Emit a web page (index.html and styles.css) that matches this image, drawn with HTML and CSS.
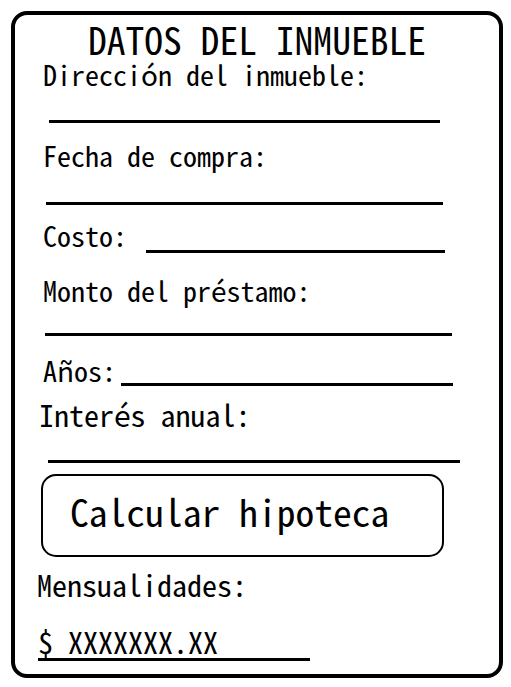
FILE: index.html
```html
<!DOCTYPE html>
<html lang="es">
<head>
<meta charset="utf-8">
<title>Datos del inmueble</title>
<link rel="stylesheet" href="styles.css">
</head>
<body>
<div class="card">
  <h1 class="title">DATOS DEL INMUEBLE</h1>

  <div class="label l-dir">Dirección del inmueble:</div>
  <div class="rule r-dir"></div>

  <div class="label l-fecha">Fecha de compra:</div>
  <div class="rule r-fecha"></div>

  <div class="row row-costo">
    <div class="label">Costo:</div>
    <div class="rule r-costo"></div>
  </div>

  <div class="label l-monto">Monto del préstamo:</div>
  <div class="rule r-monto"></div>

  <div class="row row-anos">
    <div class="label w5">Años:</div>
    <div class="rule r-anos"></div>
  </div>

  <div class="label big l-interes">Interés anual:</div>
  <div class="rule r-interes"></div>

  <button class="calc" type="button">Calcular hipoteca</button>

  <div class="label big l-mens">Mensualidades:</div>
  <div class="label big result">$ XXXXXXX.XX</div>
</div>
</body>
</html>
```

FILE: styles.css
```css
html, body {
  margin: 0;
  padding: 0;
  background: #fff;
}

body {
  padding: 11px;
  font-family: "Noto Sans Mono CJK JP", "Noto Sans CJK JP", "DejaVu Sans Mono", monospace;
  color: #000;
}

.card {
  box-sizing: border-box;
  width: 492px;
  height: 667px;
  border: 4px solid #000;
  border-radius: 16px;
  overflow: hidden;
}

.title {
  margin: 4px 0 0 0;
  font-size: 37.6px;
  line-height: 40px;
  font-weight: normal;
  text-align: center;
  white-space: nowrap;
}

.label {
  font-size: 28px;
  line-height: 28px;
  margin-left: 28px;
  white-space: nowrap;
}

.label.big {
  font-size: 30px;
  line-height: 30px;
}

.rule {
  height: 3px;
  background: #000;
}

.l-dir { margin-top: 1px; }
.r-dir { margin: 32px 0 0 34px; width: 391px; }

.l-fecha { margin-top: 18px; }
.r-fecha { margin: 33px 0 0 31px; width: 397px; }

.row {
  display: flex;
  align-items: flex-start;
}

.row-costo { margin-top: 16px; }
.r-costo { margin: 29px 0 0 19px; width: 299px; }

.l-monto { margin-top: 23px; }
.r-monto { margin: 29px 0 0 30px; width: 407px; }

.row-anos { margin-top: 20px; }
.w5 { width: 70px; flex: none; }
.r-anos { margin: 27px 0 0 8px; width: 332px; }

.l-interes { margin-top: 13px; margin-left: 24px; }
.r-interes { margin: 31px 0 0 33px; width: 412px; }

.calc {
  display: block;
  box-sizing: border-box;
  margin: 11px 0 0 26px;
  width: 403px;
  height: 83px;
  padding: 0 0 9px 27px;
  border: 2px solid #000;
  border-radius: 15px;
  background: #fff;
  color: #000;
  font-family: inherit;
  font-size: 37.6px;
  line-height: 37.6px;
  text-align: left;
}

.l-mens { margin-top: 12px; margin-left: 22px; }

.result {
  box-sizing: content-box;
  margin-top: 27px;
  margin-left: 23px;
  width: 272px;
  padding-bottom: 2px;
  border-bottom: 3px solid #000;
}
```
